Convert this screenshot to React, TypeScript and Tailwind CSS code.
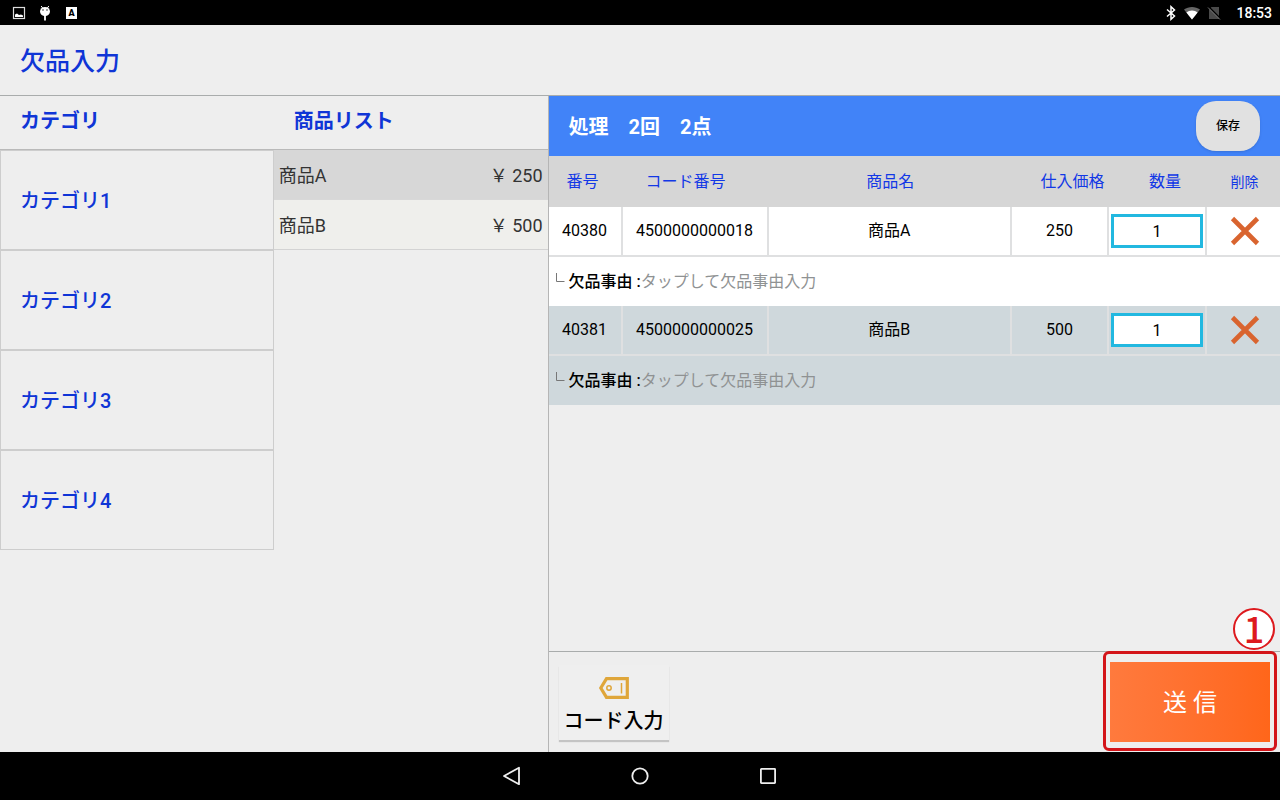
import { useState } from "react";

const categories = ["カテゴリ1", "カテゴリ2", "カテゴリ3", "カテゴリ4"];

const products = [
  { name: "商品A", price: 250 },
  { name: "商品B", price: 500 },
];

const initialItems = [
  { id: "40380", code: "4500000000018", name: "商品A", price: 250, qty: "1", reason: "" },
  { id: "40381", code: "4500000000025", name: "商品B", price: 500, qty: "1", reason: "" },
];

const StatusBar = () => (
  <div className="flex h-[25px] shrink-0 items-center justify-between bg-black pr-2 pl-3 text-white">
    <div className="flex items-center gap-3">
      <svg width="14" height="14" viewBox="0 0 14 14" fill="none">
        <rect x="1.5" y="1.5" width="11" height="11" stroke="#ddd" strokeWidth="1.2" />
        <path d="M3 11V8.5L5 7.5L7 9L9 8.5L11 9.5V11Z" fill="#fff" />
      </svg>
      <svg width="14" height="16" viewBox="0 0 14 16">
        <path d="M3.2 1L4.6 3M10.8 1L9.4 3" stroke="#fff" />
        <path d="M2 6.5a5 4.5 0 0 1 10 0a5 4.5 0 0 1-10 0Z" fill="#fff" />
        <path d="M7 10V15.5" stroke="#fff" strokeWidth="1.8" />
        <circle cx="5" cy="5" r="0.7" fill="#000" />
        <circle cx="9" cy="5" r="0.7" fill="#000" />
      </svg>
      <span className="ml-0.5 flex h-3 w-[11px] items-center justify-center bg-white text-[9px] leading-3 font-black text-black">
        A
      </span>
    </div>
    <div className="flex items-center">
      <svg width="12" height="16" viewBox="0 0 12 16" fill="none" stroke="#fff" strokeWidth="1.5">
        <path d="M2 4.5L9.500 11L6 14.300V1.700L9.500 5L2 11.500" />
      </svg>
      <svg className="ml-1.5" width="18" height="14" viewBox="0 0 18 14">
        <path d="M1 3.6C5.5 0 12.5 0 17 3.6L9 13.5Z" fill="#666" />
        <path d="M3.4 6.4C6.5 3.7 11.5 3.7 14.6 6.4L9 13.5Z" fill="#fff" />
      </svg>
      <svg className="ml-1.5" width="14" height="14" viewBox="0 0 14 14">
        <path d="M4.500 1H12V13H2V3.500Z" fill="#4a4a4a" />
        <path d="M2 1L14 13" stroke="#000" strokeWidth="1.500" />
        <path d="M1 1.500L13 13.500" stroke="#777" />
      </svg>
      <time className="ml-[15px] text-sm leading-5 font-medium">18:53</time>
    </div>
  </div>
);

const NavBar = () => (
  <nav className="flex h-12 shrink-0 justify-center bg-black">
    <button aria-label="戻る" className="flex w-32 items-center justify-center">
      <svg width="20" height="20" viewBox="0 0 20 20" fill="none" stroke="#eee" strokeWidth="1.8">
        <path d="M17 1.8V18.2L2 10Z" strokeLinejoin="round" />
      </svg>
    </button>
    <button aria-label="ホーム" className="flex w-32 items-center justify-center">
      <svg width="20" height="20" viewBox="0 0 20 20" fill="none" stroke="#eee" strokeWidth="1.8">
        <circle cx="10" cy="10" r="7.7" />
      </svg>
    </button>
    <button aria-label="履歴" className="flex w-32 items-center justify-center">
      <svg width="20" height="20" viewBox="0 0 20 20" fill="none" stroke="#eee" strokeWidth="1.8">
        <rect x="2.9" y="2.9" width="14.2" height="14.2" rx="0.5" />
      </svg>
    </button>
  </nav>
);

const App: React.FC = () => {
  const [items, setItems] = useState(initialItems);
  const [selected, setSelected] = useState("商品A");

  const updateItem = (id: string, field: "qty" | "reason", value: string) => {
    setItems(items.map((item) => (item.id === id ? { ...item, [field]: value } : item)));
  };

  const removeItem = (id: string) => {
    setItems(items.filter((item) => item.id !== id));
  };

  return (
    <div className="flex min-h-screen flex-col bg-[#eeeeee] font-['Roboto','Noto_Sans_CJK_JP',sans-serif] text-black">
      <StatusBar />
      <header className="flex h-[71px] shrink-0 items-center border-b border-[#a9acac] px-5 pt-1">
        <h1 className="text-[25px] leading-8 font-medium text-[#0f35d6]">欠品入力</h1>
      </header>

      <main className="grid grow grid-cols-[3fr_4fr]">
        <section className="flex flex-col border-r border-[#b5b5b5]">
          <div className="grid h-[54px] grid-cols-2 items-center border-b border-[#b9b9b9] pb-1 text-xl leading-6 font-bold text-[#0f35d6]">
            <h2 className="pl-5">カテゴリ</h2>
            <h2 className="pl-5">商品リスト</h2>
          </div>
          <div className="grid grid-cols-2 items-start">
            <div className="flex flex-col">
              {categories.map((category) => (
                <button
                  key={category}
                  className="h-[100px] border border-[#cdcdcd] px-[19px] pt-0.5 text-left text-xl font-medium text-[#0f35d6]"
                >
                  {category}
                </button>
              ))}
            </div>
            <div className="flex flex-col">
              {products.map((product) => (
                <button
                  key={product.name}
                  onClick={() => setSelected(product.name)}
                  className={`flex h-[50px] items-center justify-between border-b px-[5px] pt-0.5 text-lg text-[#333] ${
                    selected === product.name
                      ? "border-[#d8d8d8] bg-[#d7d7d7]"
                      : "border-[#d3d3d3] bg-[#efefec]"
                  }`}
                >
                  <span>{product.name}</span>
                  <span>￥ {product.price}</span>
                </button>
              ))}
            </div>
          </div>
        </section>

        <section className="flex flex-col">
          <div className="flex h-[60px] items-center justify-between bg-[#4183f8] px-5">
            <h2 className="pt-0.5 text-xl font-bold text-white">処理　2回　2点</h2>
            <button className="h-[50px] w-16 rounded-[20px] bg-[#e1e1e1] text-xs font-medium shadow-sm">
              保存
            </button>
          </div>

          <table className="w-full table-fixed border-separate border-spacing-0 text-center">
            <colgroup>
              <col className="w-[74px]" />
              <col className="w-[146px]" />
              <col />
              <col className="w-[97px]" />
              <col className="w-[98px]" />
              <col className="w-[73px]" />
            </colgroup>
            <thead>
              <tr className="h-[51px] bg-[#d6d6d6] text-base text-[#1238e6]">
                <th className="pr-1.5 font-normal">番号</th>
                <th className="pr-5 font-normal">コード番号</th>
                <th className="font-normal">商品名</th>
                <th className="pl-6 font-normal">仕入価格</th>
                <th className="pl-3.5 font-normal">数量</th>
                <th className="pl-0.5 text-sm font-normal">削除</th>
              </tr>
            </thead>
            {items.map((item, index) => (
              <tbody key={item.id} className={index % 2 === 0 ? "bg-white" : "bg-[#cfd8dc]"}>
                <tr className="h-[50px] text-base">
                  <td className="border-r-2 border-b-2 border-[#dfe0e1]">{item.id}</td>
                  <td className="border-r-2 border-b-2 border-[#dfe0e1]">{item.code}</td>
                  <td className="border-r-2 border-b-2 border-[#dfe0e1]">{item.name}</td>
                  <td className="border-r-2 border-b-2 border-[#dfe0e1]">{item.price}</td>
                  <td className="border-r-2 border-b-2 border-[#dfe0e1] px-0.5">
                    <input
                      aria-label={`${item.name} 数量`}
                      value={item.qty}
                      onChange={(e) => updateItem(item.id, "qty", e.target.value)}
                      className="block h-[34px] w-full border-3 border-[#22b8e0] bg-white text-center"
                    />
                  </td>
                  <td className="border-b-2 border-[#dfe0e1]">
                    <button
                      aria-label={`${item.name} 削除`}
                      onClick={() => removeItem(item.id)}
                      className="block w-full pl-0.5"
                    >
                      <svg className="mx-auto" width="30" height="30" viewBox="0 0 30 30">
                        <path d="M2.5 2.5L27.5 27.5M27.5 2.5L2.5 27.5" stroke="#d9642f" strokeWidth="4.6" />
                      </svg>
                    </button>
                  </td>
                </tr>
                <tr className="h-[49px] text-base">
                  <td colSpan={6}>
                    <div className="flex items-center pl-1.5">
                      <svg className="mr-1 mb-2" width="10" height="10" viewBox="0 0 10 10" fill="none">
                        <path d="M1.5 0V8.5H9.5" stroke="#777" />
                      </svg>
                      <label htmlFor={`reason-${item.id}`} className="font-medium">
                        欠品事由 :
                      </label>
                      <input
                        id={`reason-${item.id}`}
                        value={item.reason}
                        placeholder="タップして欠品事由入力"
                        onChange={(e) => updateItem(item.id, "reason", e.target.value)}
                        className="grow bg-transparent placeholder:text-[#8f9293]"
                      />
                    </div>
                  </td>
                </tr>
              </tbody>
            ))}
          </table>

          <footer className="mt-auto flex h-[101px] items-center justify-between border-t border-[#a9acac] px-2.5">
            <button className="flex h-[75px] w-[110px] flex-col items-center justify-center gap-2.5 bg-[#efefef] pt-1.5 text-xl leading-6 font-medium shadow-[0px_2px_1px_#c4c4c4]">
              <svg width="32" height="22" viewBox="0 0 32 22" fill="none" stroke="#dfa63a">
                <path d="M8.5 1.7H29.3V20.3H8.5L2.8 11Z" strokeWidth="3.2" />
                <circle cx="11" cy="11" r="2.2" strokeWidth="1.5" />
                <path d="M23.5 6V16.5" strokeWidth="1.5" />
              </svg>
              コード入力
            </button>

            <div className="relative">
              <button className="block h-20 w-40 bg-linear-to-r from-[#ff7a3d] to-[#ff661a] pt-0.5 text-2xl text-white">
                送 信
              </button>
              {/* highlight frame with step number */}
              <div className="pointer-events-none absolute -inset-x-[7px] -top-[11px] -bottom-[9px] rounded-md border-3 border-[#d3151a]" />
              <span className="absolute -top-[54px] -right-[5px] flex h-[42px] w-[42px] items-center justify-center rounded-full border-2 border-[#dd1a1e] bg-white pb-1 font-['Noto_Sans_CJK_JP',sans-serif] text-4xl leading-9 font-medium text-[#dd1a1e]">
                1
              </span>
            </div>
          </footer>
        </section>
      </main>
      <NavBar />
    </div>
  );
};

export default App;
